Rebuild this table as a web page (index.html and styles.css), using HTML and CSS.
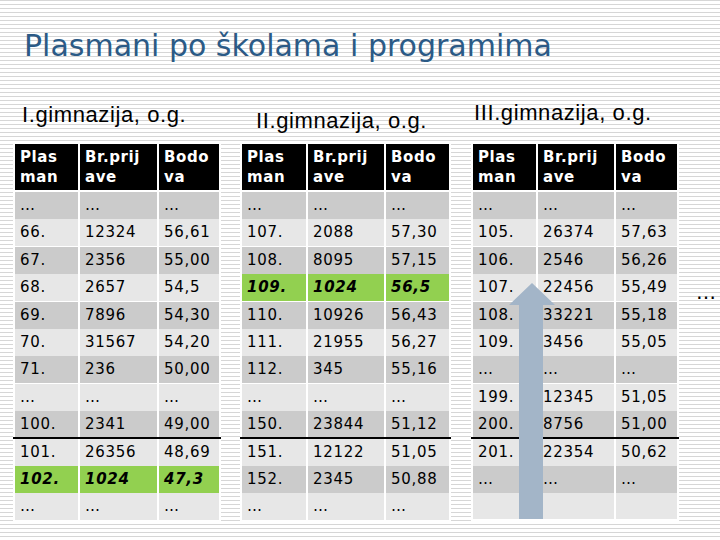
FILE: index.html
```html
<!DOCTYPE html>
<html>
<head>
<meta charset="utf-8">
<link rel="stylesheet" href="styles.css">
</head>
<body>
<h1 class="title">Plasmani po školama i programima</h1>
<div class="columns">
  <div class="col col1">
    <div class="sub">I.gimnazija, o.g.</div>
    <div class="tbl">
      <div class="row head"><div>Plas man</div><div>Br.prij ave</div><div>Bodo va</div></div>
      <div class="row dk"><div>…</div><div>…</div><div>…</div></div>
      <div class="row lt"><div>66.</div><div>12324</div><div>56,61</div></div>
      <div class="row dk"><div>67.</div><div>2356</div><div>55,00</div></div>
      <div class="row lt"><div>68.</div><div>2657</div><div>54,5</div></div>
      <div class="row dk"><div>69.</div><div>7896</div><div>54,30</div></div>
      <div class="row lt"><div>70.</div><div>31567</div><div>54,20</div></div>
      <div class="row dk"><div>71.</div><div>236</div><div>50,00</div></div>
      <div class="row lt"><div>…</div><div>…</div><div>…</div></div>
      <div class="row dk"><div>100.</div><div>2341</div><div>49,00</div></div>
      <div class="row lt sep"><div>101.</div><div>26356</div><div>48,69</div></div>
      <div class="row gr"><div>102.</div><div>1024</div><div>47,3</div></div>
      <div class="row lt"><div>…</div><div>…</div><div>…</div></div>
    </div>
  </div>
  <div class="col col2">
    <div class="sub">II.gimnazija, o.g.</div>
    <div class="tbl">
      <div class="row head"><div>Plas man</div><div>Br.prij ave</div><div>Bodo va</div></div>
      <div class="row dk"><div>…</div><div>…</div><div>…</div></div>
      <div class="row lt"><div>107.</div><div>2088</div><div>57,30</div></div>
      <div class="row dk"><div>108.</div><div>8095</div><div>57,15</div></div>
      <div class="row gr"><div>109.</div><div>1024</div><div>56,5</div></div>
      <div class="row dk"><div>110.</div><div>10926</div><div>56,43</div></div>
      <div class="row lt"><div>111.</div><div>21955</div><div>56,27</div></div>
      <div class="row dk"><div>112.</div><div>345</div><div>55,16</div></div>
      <div class="row lt"><div>…</div><div>…</div><div>…</div></div>
      <div class="row dk"><div>150.</div><div>23844</div><div>51,12</div></div>
      <div class="row lt sep"><div>151.</div><div>12122</div><div>51,05</div></div>
      <div class="row dk"><div>152.</div><div>2345</div><div>50,88</div></div>
      <div class="row lt"><div>…</div><div>…</div><div>…</div></div>
    </div>
  </div>
  <div class="col col3">
    <div class="sub">III.gimnazija, o.g.</div>
    <div class="tbl">
      <div class="row head"><div>Plas man</div><div>Br.prij ave</div><div>Bodo va</div></div>
      <div class="row dk"><div>…</div><div>…</div><div>…</div></div>
      <div class="row lt"><div>105.</div><div>26374</div><div>57,63</div></div>
      <div class="row dk"><div>106.</div><div>2546</div><div>56,26</div></div>
      <div class="row lt"><div>107.</div><div>22456</div><div>55,49</div></div>
      <div class="row dk"><div>108.</div><div>33221</div><div>55,18</div></div>
      <div class="row lt"><div>109.</div><div>3456</div><div>55,05</div></div>
      <div class="row dk"><div>…</div><div>…</div><div>…</div></div>
      <div class="row lt"><div>199.</div><div>12345</div><div>51,05</div></div>
      <div class="row dk"><div>200.</div><div>8756</div><div>51,00</div></div>
      <div class="row lt sep"><div>201.</div><div>22354</div><div>50,62</div></div>
      <div class="row dk"><div>…</div><div>…</div><div>…</div></div>
      <div class="row lt"><div></div><div></div><div></div></div>
    </div>
    <svg class="arrow" width="48" height="236" viewBox="0 0 48 236">
      <polygon points="24,0 47,22 35,22 35,236 11,236 11,22 1,22" fill="#a3b5c8"/>
    </svg>
  </div>
  <div class="more">…</div>
</div>
</body>
</html>
```
FILE: styles.css
```css
html, body {
  margin: 0;
  padding: 0;
}
body {
  width: 720px;
  height: 540px;
  overflow: hidden;
  background: repeating-linear-gradient(to bottom, #d6d6d6 0, #d6d6d6 1px, #ffffff 1px, #ffffff 4px);
  font-family: "DejaVu Sans", Verdana, sans-serif;
}
.title {
  margin: 0;
  padding: 28px 0 0 24px;
  height: 68px;
  box-sizing: border-box;
  font-family: "DejaVu Sans", sans-serif;
  font-weight: normal;
  font-size: 30px;
  line-height: 36px;
  color: #2b5a86;
  letter-spacing: 0;
}
.columns {
  display: flex;
  align-items: flex-start;
  padding-left: 13px;
  margin-top: 28px;
}
.col {
  display: flex;
  flex-direction: column;
  position: relative;
}
.col2 { margin-left: 19px; }
.col3 { margin-left: 20px; }
.sub {
  height: 46px;
  box-sizing: border-box;
  font-family: "Liberation Sans", Arial, sans-serif;
  font-size: 22px;
  line-height: 24px;
  letter-spacing: 0.6px;
  color: #000;
}
.col1 .sub { padding: 7px 0 0 9px; }
.col2 .sub { padding: 13px 0 0 16px; }
.col3 .sub { padding: 5px 0 0 3px; }
.tbl {
  background: #fff;
  padding: 2px;
  display: flex;
  flex-direction: column;
  gap: 2px;
}
.row {
  display: grid;
  gap: 2px;
  height: 25.4px;
}
.col1 .row { grid-template-columns: 63px 77px 60px; }
.col2 .row { grid-template-columns: 64px 76px 63px; }
.col3 .row { grid-template-columns: 63px 76px 61px; }
.row > div {
  padding-left: 5px;
  font-size: 15px;
  line-height: 27px;
  letter-spacing: 0.7px;
  color: #000;
  white-space: nowrap;
}
.row.head { height: 46px; }
.row.head > div {
  background: #000;
  color: #fff;
  font-weight: bold;
  line-height: 20px;
  padding-top: 3px;
  white-space: normal;
  letter-spacing: 0.6px;
}
.dk > div { background: #cbcbcb; }
.lt > div { background: #e7e7e7; }
.gr > div {
  background: #92d050;
  font-weight: bold;
  font-style: italic;
}
.sep {
  margin: -2px -2px 0;
  padding: 0 2px;
  border-top: 2px solid #000;
}
.arrow {
  position: absolute;
  left: 37px;
  top: 187px;
}
.more {
  margin: 184px 0 0 17px;
  font-size: 20px;
  line-height: 24px;
  color: #000;
}
```
